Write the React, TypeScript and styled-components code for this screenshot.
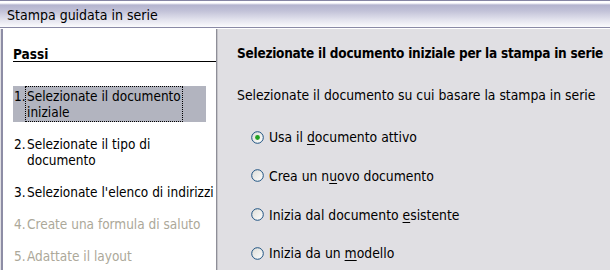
import React from "react";
import styled, { createGlobalStyle } from "styled-components";

const Global = createGlobalStyle`
  html, body { margin: 0; padding: 0; background: #e0dfe3; }
  *, *::before, *::after { box-sizing: border-box; }
  body {
    font-family: "DejaVu Sans Condensed", "DejaVu Sans", sans-serif;
    font-stretch: condensed;
    font-size: 13.5px;
    color: #000;
  }
`;

const Window = styled.div`
  width: 610px;
  height: 270px;
  overflow: hidden;
  display: flex;
  flex-direction: column;
  background: #e0dfe3;
`;

const TitleBar = styled.div`
  height: 28px;
  flex: none;
  border-top: 1px solid #8585a3;
  border-bottom: 1px solid #8a8aa6;
  background: linear-gradient(
    #ffffff 0px,
    #ffffff 2px,
    #b4b4ce 4px,
    #c2c2d8 10px,
    #e0e0ec 18px,
    #fbfbfd 26px
  );
  display: flex;
  align-items: center;
  padding: 1px 0 0 7px;
  font-size: 14px;
  line-height: 16px;
`;

const Body = styled.div`
  flex: 1;
  display: flex;
  padding-left: 1px;
  border-top: 1px solid #ffffff;
`;

const StepsPanel = styled.div`
  width: 216px;
  flex: none;
  background: #ffffff;
  border-left: 2px solid #8d8da5;
  border-right: 1px solid #8e8e98;
  padding-left: 10px;
`;

const StepsHeader = styled.div`
  margin-top: 19px;
  font-weight: bold;
  line-height: 13px;
  height: 14px;
  border-bottom: 1px solid #000;
`;

const StepList = styled.div`
  margin-top: 24px;
  margin-right: 10px;
  display: flex;
  flex-direction: column;
  gap: 12px;
`;

const Step = styled.div<{ $active?: boolean; $disabled?: boolean }>`
  display: flex;
  padding: 2px 0;
  line-height: 16px;
  white-space: pre;
  background: ${(p) => (p.$active ? "#b2b4bf" : "transparent")};
  color: ${(p) => (p.$disabled ? "#aca899" : "#000")};
`;

const StepNum = styled.span`
  width: 13px;
  flex: none;
  padding-left: 1px;
`;

const StepLabel = styled.span<{ $focus?: boolean }>`
  flex: none;
  margin-left: 1px;
  outline: ${(p) => (p.$focus ? "1px dotted #000" : "none")};
  outline-offset: 1px;
`;

const MainPanel = styled.div`
  flex: 1;
  border-left: 1px solid #c4c4c8;
  padding-left: 19px;
  line-height: 16px;
  font-size: 13.8px;
`;

const Heading = styled.div`
  margin-top: 16px;
  font-weight: bold;
  font-size: 13.5px;
  letter-spacing: -0.25px;
  white-space: nowrap;
`;

const Intro = styled.div`
  margin-top: 26px;
  white-space: nowrap;
`;

const RadioList = styled.div`
  margin-top: 26px;
  padding-left: 14px;
  display: flex;
  flex-direction: column;
  gap: 22.8px;
`;

const RadioRow = styled.label`
  display: flex;
  align-items: center;
  gap: 5px;
  white-space: nowrap;
`;

const U = styled.span`
  text-decoration: underline;
  text-underline-offset: 2px;
`;

const Radio = ({ checked }: { checked?: boolean }) => (
  <svg width="13" height="13" viewBox="0 0 13 13">
    <defs>
      <linearGradient id="rg" x1="0" y1="0" x2="1" y2="1">
        <stop offset="0" stopColor="#dcdcd6" />
        <stop offset="1" stopColor="#ffffff" />
      </linearGradient>
    </defs>
    <circle cx="6.5" cy="6.5" r="5.8" fill="url(#rg)" stroke="#1c5180" strokeWidth="1" />
    {checked && <circle cx="6.5" cy="6.5" r="2.4" fill="#21a121" />}
  </svg>
);

const steps = [
  { n: "1.", t: "Selezionate il documento\niniziale", active: true },
  { n: "2.", t: "Selezionate il tipo di\ndocumento" },
  { n: "3.", t: "Selezionate l'elenco di indirizzi" },
  { n: "4.", t: "Create una formula di saluto", disabled: true },
  { n: "5.", t: "Adattate il layout", disabled: true },
];

export default function App() {
  return (
    <>
      <Global />
      <Window>
        <TitleBar>Stampa guidata in serie</TitleBar>
        <Body>
          <StepsPanel>
            <StepsHeader>Passi</StepsHeader>
            <StepList>
              {steps.map((s) => (
                <Step key={s.n} $active={s.active} $disabled={s.disabled}>
                  <StepNum>{s.n}</StepNum>
                  <StepLabel $focus={s.active}>{s.t}</StepLabel>
                </Step>
              ))}
            </StepList>
          </StepsPanel>
          <MainPanel>
            <Heading>Selezionate il documento iniziale per la stampa in serie</Heading>
            <Intro>Selezionate il documento su cui basare la stampa in serie</Intro>
            <RadioList>
              <RadioRow>
                <Radio checked />
                <span>
                  Usa il <U>d</U>ocumento attivo
                </span>
              </RadioRow>
              <RadioRow>
                <Radio />
                <span>
                  Crea un n<U>u</U>ovo documento
                </span>
              </RadioRow>
              <RadioRow>
                <Radio />
                <span>
                  Inizia dal documento <U>e</U>sistente
                </span>
              </RadioRow>
              <RadioRow>
                <Radio />
                <span>
                  Inizia da un <U>m</U>odello
                </span>
              </RadioRow>
            </RadioList>
          </MainPanel>
        </Body>
      </Window>
    </>
  );
}
